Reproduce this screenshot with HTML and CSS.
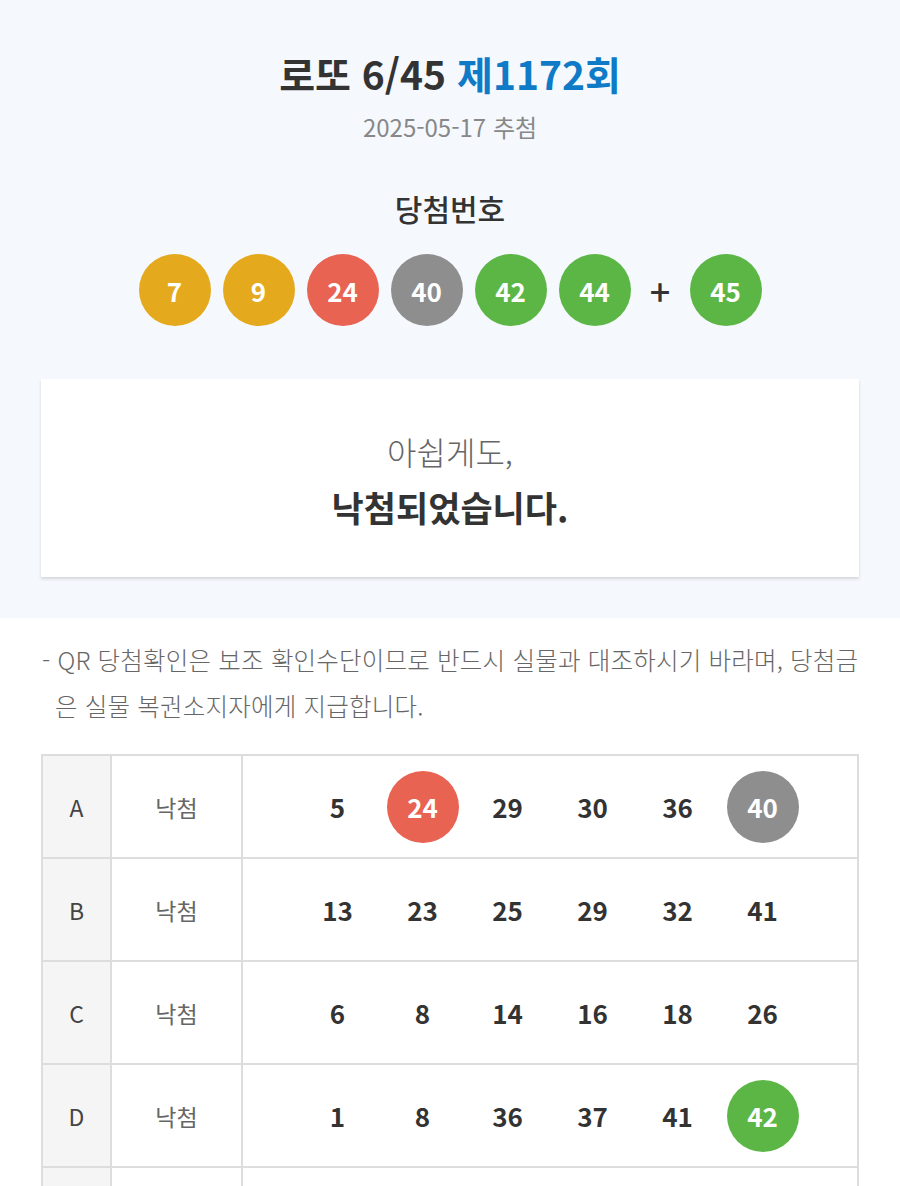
FILE: index.html
```html
<!DOCTYPE html>
<html lang="ko">
<head>
<meta charset="utf-8">
<title>로또 6/45 제1172회</title>
<link rel="stylesheet" href="styles.css">
</head>
<body>
<section class="top">
  <h1 class="title">로또 6/45 <span class="round">제1172회</span></h1>
  <p class="date">2025-05-17 추첨</p>
  <h2 class="label">당첨번호</h2>
  <div class="balls">
    <span class="ball yellow">7</span>
    <span class="ball yellow">9</span>
    <span class="ball red">24</span>
    <span class="ball gray">40</span>
    <span class="ball green">42</span>
    <span class="ball green">44</span>
    <span class="plus">+</span>
    <span class="ball green">45</span>
  </div>
  <div class="card">
    <p class="sorry">아쉽게도,</p>
    <p class="result">낙첨되었습니다.</p>
  </div>
</section>
<p class="notice">- QR 당첨확인은 보조 확인수단이므로 반드시 실물과 대조하시기 바라며, 당첨금은 실물 복권소지자에게 지급합니다.</p>
<table class="games">
  <tr>
    <td class="game">A</td>
    <td class="status">낙첨</td>
    <td class="nums"><div class="row"><span class="n">5</span><span class="n ball red">24</span><span class="n">29</span><span class="n">30</span><span class="n">36</span><span class="n ball gray">40</span></div></td>
  </tr>
  <tr>
    <td class="game">B</td>
    <td class="status">낙첨</td>
    <td class="nums"><div class="row"><span class="n">13</span><span class="n">23</span><span class="n">25</span><span class="n">29</span><span class="n">32</span><span class="n">41</span></div></td>
  </tr>
  <tr>
    <td class="game">C</td>
    <td class="status">낙첨</td>
    <td class="nums"><div class="row"><span class="n">6</span><span class="n">8</span><span class="n">14</span><span class="n">16</span><span class="n">18</span><span class="n">26</span></div></td>
  </tr>
  <tr>
    <td class="game">D</td>
    <td class="status">낙첨</td>
    <td class="nums"><div class="row"><span class="n">1</span><span class="n">8</span><span class="n">36</span><span class="n">37</span><span class="n">41</span><span class="n ball green">42</span></div></td>
  </tr>
  <tr>
    <td class="game">E</td>
    <td class="status">낙첨</td>
    <td class="nums"><div class="row"><span class="n">3</span><span class="n">11</span><span class="n">19</span><span class="n">27</span><span class="n">33</span><span class="n">38</span></div></td>
  </tr>
</table>
</body>
</html>
```
FILE: styles.css
```css
* { box-sizing: border-box; }
body {
  margin: 0;
  background: #ffffff;
  font-family: "Noto Sans CJK KR", "Noto Sans", sans-serif;
  color: #333333;
}
p, h1, h2 { margin: 0; }

.top {
  background: #f5f9fe;
  padding: 48px 41px 41px 41px;
  text-align: center;
}
.title {
  font-size: 39px;
  line-height: 50px;
  font-weight: 700;
  color: #333333;
  letter-spacing: 0;
}
.round { color: #0f7ac6; }
.date {
  margin-top: 14px;
  font-size: 24px;
  line-height: 30px;
  color: #888888;
  letter-spacing: 0;
}
.label {
  margin-top: 48px;
  font-size: 30px;
  line-height: 36px;
  font-weight: 500;
  color: #333333;
}
.balls {
  margin-top: 28px;
  display: flex;
  justify-content: center;
  align-items: center;
  gap: 12px;
}
.ball {
  width: 72px;
  height: 72px;
  border-radius: 50%;
  display: flex;
  align-items: center;
  justify-content: center;
  color: #ffffff;
  font-size: 26px;
  font-weight: 700;
}
.yellow { background: #e4a91c; }
.red { background: #e86352; }
.gray { background: #8e8e8e; }
.green { background: #5cb646; }
.plus {
  width: 35px;
  text-align: center;
  font-size: 36px;
  font-weight: 500;
  color: #333333;
  line-height: 72px;
}
.card {
  margin-top: 53px;
  background: #ffffff;
  box-shadow: 0 2px 3px rgba(0, 0, 0, 0.14);
  padding: 50px 20px 46px;
}
.sorry {
  font-size: 32px;
  line-height: 44px;
  font-weight: 300;
  color: #666666;
}
.result {
  margin-top: 10px;
  font-size: 35px;
  line-height: 48px;
  font-weight: 700;
  color: #333333;
  letter-spacing: 0;
}

.notice {
  margin: 19px 41px 25px 42px;
  padding-left: 13px;
  text-indent: -13px;
  font-size: 24.5px;
  line-height: 46px;
  font-weight: 300;
  color: #666666;
  letter-spacing: 0.2px;
}

.games {
  margin: 0 41px;
  width: 818px;
  border-collapse: collapse;
  border: 2px solid #dddddd;
}
.games td {
  border: 2px solid #dddddd;
  height: 103px;
  text-align: center;
  vertical-align: middle;
  padding: 0;
}
.game {
  width: 69px;
  background: #f5f5f5;
  font-size: 23px;
  color: #444444;
}
.status {
  width: 131px;
  font-size: 23px;
  color: #666666;
}
.row {
  display: flex;
  justify-content: center;
  gap: 13px;
}
.n {
  width: 72px;
  height: 72px;
  display: flex;
  align-items: center;
  justify-content: center;
  font-size: 26px;
  font-weight: 700;
  color: #333333;
}
.n.ball { color: #ffffff; }
```
